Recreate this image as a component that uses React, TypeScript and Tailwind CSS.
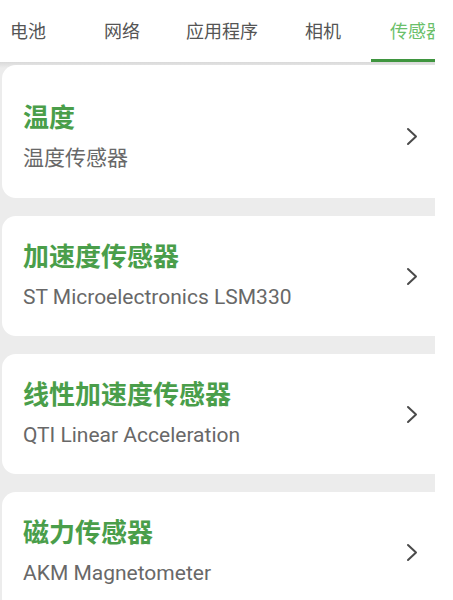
const TABS = [
  { label: '电池', box: 'w-[74px] pl-[10px]', active: false },
  { label: '网络', box: 'w-[97px] pl-[30px]', active: false },
  { label: '应用程序', box: 'w-[101px] pl-[15px]', active: false },
  { label: '相机', box: 'w-[99px] pl-[33px]', active: false },
  { label: '传感器', box: 'w-[92px] pl-[19px]', active: true },
];

const SENSORS = [
  { title: '温度', subtitle: '温度传感器' },
  { title: '加速度传感器', subtitle: 'ST Microelectronics LSM330' },
  { title: '线性加速度传感器', subtitle: 'QTI Linear Acceleration' },
  { title: '磁力传感器', subtitle: 'AKM Magnetometer' },
];

function Chevron() {
  return (
    <svg width="12" height="19" viewBox="0 0 12 19" fill="none" className="shrink-0">
      <path d="M2 2l8 7.5L2 17" stroke="#4a4a4a" strokeWidth="2" strokeLinecap="round" strokeLinejoin="round" />
    </svg>
  );
}

export default function App() {
  return (
    <div
      className="w-[453px] h-[600px] overflow-hidden bg-white flex"
      style={{ fontFamily: 'Roboto, "Noto Sans CJK SC", sans-serif' }}
    >
      <div className="w-[435px] shrink-0 flex flex-col">
        <div className="h-[62px] flex overflow-hidden shrink-0">
          {TABS.map((tab) => (
            <div
              key={tab.label}
              className={`${tab.box} shrink-0 flex items-center text-[18px] ${
                tab.active ? 'text-[#6bbf6b] border-b-[3px] border-[#3f953f] pt-[3px]' : 'text-[#555555]'
              }`}
            >
              <span className="whitespace-nowrap">{tab.label}</span>
            </div>
          ))}
        </div>
        <div className="flex-1 bg-[#ececec] pt-[3px] flex flex-col gap-[18px] bg-gradient-to-b from-[#d9d9d9] to-[#ececec] bg-[length:100%_6px] bg-no-repeat">
          {SENSORS.map((s, i) => (
            <div
              key={s.title}
              className={`bg-white rounded-l-[14px] ml-[2px] flex items-center justify-between pl-[21px] pr-[17px] shrink-0 ${
                i === 0 ? 'h-[133px] pt-[10px]' : 'h-[120px]'
              }`}
            >
              <div className="flex flex-col">
                <div className="text-[26px] leading-[30px] font-bold text-[#4a9e4a]">{s.title}</div>
                <div className="text-[21px] leading-[25px] mt-[13px] text-[#686868]">{s.subtitle}</div>
              </div>
              <Chevron />
            </div>
          ))}
        </div>
      </div>
    </div>
  );
}
